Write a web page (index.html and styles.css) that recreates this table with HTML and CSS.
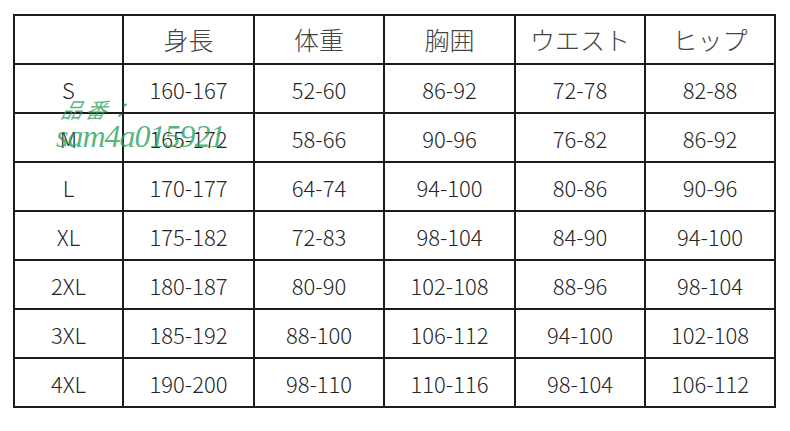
FILE: index.html
```html
<!DOCTYPE html>
<html lang="ja">
<head>
<meta charset="utf-8">
<link rel="stylesheet" href="styles.css">
</head>
<body>
<div class="page">
  <div class="chart">
    <div class="cell head"></div>
    <div class="cell head">身長</div>
    <div class="cell head">体重</div>
    <div class="cell head">胸囲</div>
    <div class="cell head">ウエスト</div>
    <div class="cell head">ヒップ</div>

    <div class="cell">S</div><div class="cell">160-167</div><div class="cell">52-60</div><div class="cell">86-92</div><div class="cell">72-78</div><div class="cell">82-88</div>
    <div class="cell">M</div><div class="cell">165-172</div><div class="cell">58-66</div><div class="cell">90-96</div><div class="cell">76-82</div><div class="cell">86-92</div>
    <div class="cell">L</div><div class="cell">170-177</div><div class="cell">64-74</div><div class="cell">94-100</div><div class="cell">80-86</div><div class="cell">90-96</div>
    <div class="cell">XL</div><div class="cell">175-182</div><div class="cell">72-83</div><div class="cell">98-104</div><div class="cell">84-90</div><div class="cell">94-100</div>
    <div class="cell">2XL</div><div class="cell">180-187</div><div class="cell">80-90</div><div class="cell">102-108</div><div class="cell">88-96</div><div class="cell">98-104</div>
    <div class="cell">3XL</div><div class="cell">185-192</div><div class="cell">88-100</div><div class="cell">106-112</div><div class="cell">94-100</div><div class="cell">102-108</div>
    <div class="cell">4XL</div><div class="cell">190-200</div><div class="cell">98-110</div><div class="cell">110-116</div><div class="cell">98-104</div><div class="cell">106-112</div>
  </div>
  <div class="watermark">
    <div class="wm-label">品番：</div>
    <div class="wm-code">sam4a015921</div>
  </div>
</div>
</body>
</html>
```

FILE: styles.css
```css
html, body {
  margin: 0;
  padding: 0;
  background: #ffffff;
}

.page {
  position: relative;
  width: 790px;
  height: 431px;
  padding: 14px 0 0 13px;
  box-sizing: border-box;
}

.chart {
  display: grid;
  grid-template-columns: 109px 131px 130px 131px 130px 130px;
  grid-auto-rows: 49px;
  width: 761px;
  border-left: 2px solid #1c1c1c;
  border-top: 2px solid #1c1c1c;
  font-family: "Noto Sans CJK JP", "Noto Sans", sans-serif;
  color: #262626;
}

.cell {
  box-sizing: border-box;
  border-right: 2px solid #1c1c1c;
  border-bottom: 2px solid #1c1c1c;
  display: flex;
  align-items: center;
  justify-content: center;
  font-size: 22px;
  font-weight: 300;
  line-height: 1;
}

.head {
  font-size: 25px;
  font-weight: 300;
  color: #444444;
}

.watermark {
  position: absolute;
  left: 56px;
  top: 97px;
  color: rgba(40, 160, 90, 0.78);
  font-family: "Liberation Serif", serif;
  font-style: italic;
  pointer-events: none;
}

.wm-label {
  font-family: "Noto Sans CJK JP", sans-serif;
  font-size: 21px;
  font-weight: 400;
  line-height: 25px;
  letter-spacing: 3px;
  transform: skewX(-14deg);
  transform-origin: left bottom;
  margin-left: 3px;
}

.wm-code {
  font-size: 32px;
  line-height: 28px;
  letter-spacing: -1px;
}
```
